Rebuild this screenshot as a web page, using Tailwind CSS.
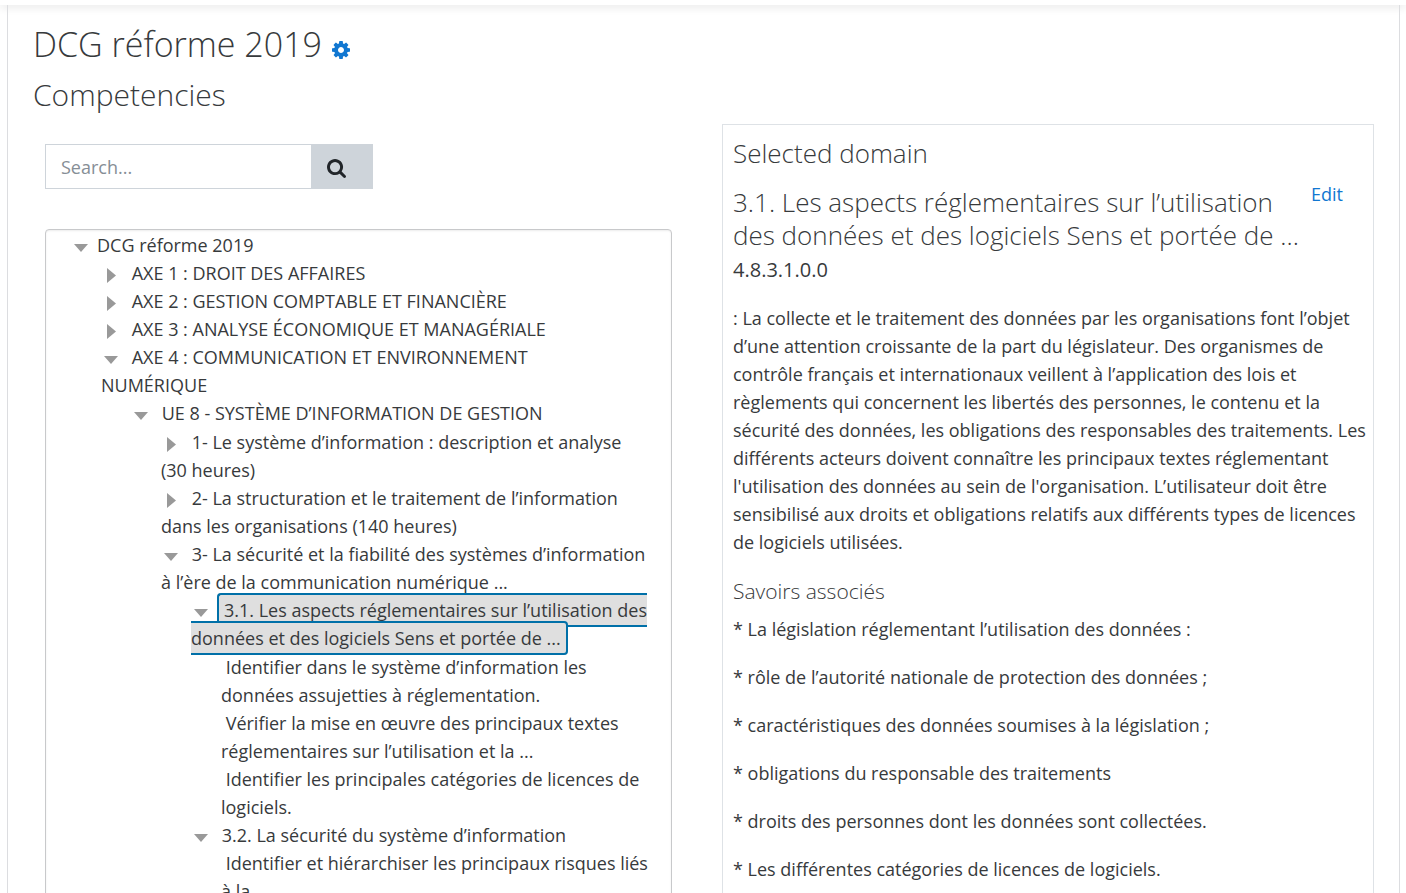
<!DOCTYPE html>
<html lang="fr">
<head>
<meta charset="utf-8">
<title>DCG réforme 2019 - Competencies</title>
<script src="https://cdn.jsdelivr.net/npm/@tailwindcss/browser@4"></script>
</head>
<body class="h-screen overflow-hidden bg-white font-['Open_Sans',sans-serif] text-[18px] leading-7 text-[#373a3c]">
<header class="h-[5px] bg-white shadow-[0_2px_8px_rgba(0,0,0,0.12)]"></header>
<main class="mr-[6px] ml-[7px] min-h-screen border-x border-[#dcdde0] px-[25px] pt-[16px]">
  <h1 class="flex items-center gap-[10px] text-[34px] leading-[46px] font-light whitespace-nowrap">DCG réforme 2019
    <a href="#" aria-label="Settings" class="mt-3 text-[#1177d1]">
      <svg class="size-[18px]" viewBox="0 0 1536 1536" fill="currentColor"><path d="M1024 768q0-106-75-181t-181-75-181 75-75 181 75 181 181 75 181-75 75-181zm512-109v222q0 12-8 23t-20 13l-185 28q-19 54-39 91 35 50 107 138 10 12 10 25t-9 23q-27 37-99 108t-94 71q-12 0-26-9l-138-108q-44 23-91 38-16 136-29 186-7 28-36 28h-222q-14 0-24.500-8.500t-11.500-21.500l-28-184q-49-16-90-37l-141 107q-10 9-25 9-14 0-25-11-126-114-165-168-7-10-7-23 0-12 8-23 15-21 51-66.500t54-70.500q-27-50-41-99l-183-27q-13-2-21-12.500t-8-23.500v-222q0-12 8-23t19-13l186-28q14-46 39-92-40-57-107-138-10-12-10-24 0-10 9-23 26-36 98.500-107.500t94.500-71.500q13 0 26 10l138 107q44-23 91-38 16-136 29-186 7-28 36-28h222q14 0 24.500 8.500t11.500 21.500l28 184q49 16 90 37l142-107q9-9 24-9 13 0 25 10 129 119 165 170 7 8 7 22 0 12-8 23-15 21-51 66.500t-54 70.500q26 50 41 98l183 28q13 2 21 12.500t8 23.500z"/></svg>
    </a>
  </h1>
  <h2 class="mt-[10px] text-[30px] leading-9 font-light">Competencies</h2>

  <div class="mt-[11px] grid grid-cols-[627fr_652fr] items-start gap-[50px] pl-3">
    <section class="min-w-0 pt-5">
      <form class="flex h-[45px] w-[328px]">
        <input type="text" aria-label="Search" placeholder="Search..." class="min-w-0 flex-1 border border-r-0 border-[#ced4da] px-[15px] placeholder:text-[#868e96]">
        <button type="button" aria-label="Search" class="flex w-[62px] items-center bg-[#ced4da] pl-4 text-[#212529]">
          <svg class="mt-[3px] size-[19px]" viewBox="0 0 1664 1664" fill="currentColor"><path d="M1152 704q0-185-131.500-316.500t-316.500-131.500-316.500 131.500-131.500 316.500 131.500 316.500 316.500 131.500 316.500-131.500 131.500-316.500zm512 832q0 52-38 90t-90 38q-54 0-90-38l-343-342q-179 124-399 124-143 0-273.500-55.500t-225-150-150-225-55.500-273.500 55.500-273.500 150-225 225-150 273.500-55.500 273.500 55.500 225 150 150 225 55.500 273.500q0 220-124 399l343 343q37 37 37 90z"/></svg>
        </button>
      </form>

      <ul class="mt-[40px] min-h-screen rounded border border-[#c8c9cb] pt-px pl-[25px] whitespace-nowrap shadow-[inset_0_1px_2px_rgba(0,0,0,0.08)]">
        <li><svg class="mr-[9px] ml-[3px] inline-block h-[8px] w-[14px] align-[0px] text-[#999]" viewBox="0 0 14 8" fill="currentColor"><path d="M0 0h14L7 8z"/></svg>DCG réforme 2019
          <ul class="pl-[30px]">
            <li><svg class="mr-[11px] ml-[6px] inline-block h-[15px] w-[9px] align-[-3px] text-[#999]" viewBox="0 0 9 15" fill="currentColor"><path d="M0 0v15l9-7.500z"/></svg> AXE 1 : DROIT DES AFFAIRES</li>
            <li><svg class="mr-[11px] ml-[6px] inline-block h-[15px] w-[9px] align-[-3px] text-[#999]" viewBox="0 0 9 15" fill="currentColor"><path d="M0 0v15l9-7.500z"/></svg> AXE 2 : GESTION COMPTABLE ET FINANCIÈRE</li>
            <li><svg class="mr-[11px] ml-[6px] inline-block h-[15px] w-[9px] align-[-3px] text-[#999]" viewBox="0 0 9 15" fill="currentColor"><path d="M0 0v15l9-7.500z"/></svg> AXE 3 : ANALYSE ÉCONOMIQUE ET MANAGÉRIALE</li>
            <li><svg class="mr-[9px] ml-[3px] inline-block h-[8px] w-[14px] align-[0px] text-[#999]" viewBox="0 0 14 8" fill="currentColor"><path d="M0 0h14L7 8z"/></svg> AXE 4 : COMMUNICATION ET ENVIRONNEMENT<br>NUMÉRIQUE
              <ul class="pl-[30px]">
                <li><svg class="mr-[9px] ml-[3px] inline-block h-[8px] w-[14px] align-[0px] text-[#999]" viewBox="0 0 14 8" fill="currentColor"><path d="M0 0h14L7 8z"/></svg> UE 8 - SYSTÈME D’INFORMATION DE GESTION
                  <ul class="mt-px pl-[30px]">
                    <li><svg class="mr-[11px] ml-[6px] inline-block h-[15px] w-[9px] align-[-3px] text-[#999]" viewBox="0 0 9 15" fill="currentColor"><path d="M0 0v15l9-7.500z"/></svg> 1- Le système d’information : description et analyse<br>(30 heures)</li>
                    <li><svg class="mr-[11px] ml-[6px] inline-block h-[15px] w-[9px] align-[-3px] text-[#999]" viewBox="0 0 9 15" fill="currentColor"><path d="M0 0v15l9-7.500z"/></svg> 2- La structuration et le traitement de l’information<br>dans les organisations (140 heures)</li>
                    <li><svg class="mr-[9px] ml-[3px] inline-block h-[8px] w-[14px] align-[0px] text-[#999]" viewBox="0 0 14 8" fill="currentColor"><path d="M0 0h14L7 8z"/></svg> 3- La sécurité et la fiabilité des systèmes d’information<br>à l’ère de la communication numérique ...
                      <ul class="pl-[30px]">
                        <li><svg class="mr-[9px] ml-[3px] inline-block h-[8px] w-[14px] align-[0px] text-[#999]" viewBox="0 0 14 8" fill="currentColor"><path d="M0 0h14L7 8z"/></svg><span class="rounded border-2 border-[#0070a8] bg-[#dfdfdf] px-[5px] py-[3px]">3.1. Les aspects réglementaires sur l’utilisation des<br>données et des logiciels Sens et portée de ...</span>
                          <ul class="mt-px pl-[30px]">
                            <li>&nbsp;Identifier dans le système d’information les<br>données assujetties à réglementation.</li>
                            <li>&nbsp;Vérifier la mise en œuvre des principaux textes<br>réglementaires sur l’utilisation et la ...</li>
                            <li>&nbsp;Identifier les principales catégories de licences de<br>logiciels.</li>
                          </ul>
                        </li>
                        <li><svg class="mr-[9px] ml-[3px] inline-block h-[8px] w-[14px] align-[0px] text-[#999]" viewBox="0 0 14 8" fill="currentColor"><path d="M0 0h14L7 8z"/></svg> 3.2. La sécurité du système d’information
                          <ul class="pl-[30px]">
                            <li>&nbsp;Identifier et hiérarchiser les principaux risques liés<br>à la</li>
                          </ul>
                        </li>
                      </ul>
                    </li>
                  </ul>
                </li>
              </ul>
            </li>
          </ul>
        </li>
      </ul>
    </section>

    <section class="min-h-screen min-w-0 border border-[#dee2e6] px-[10px] pt-3 whitespace-nowrap">
      <h3 class="text-[26px] leading-[33px] font-light">Selected domain</h3>
      <div class="mt-4 flex items-start justify-between pr-5">
        <h4 class="text-[26px] leading-[33px] font-light">3.1. Les aspects réglementaires sur l’utilisation<br>des données et des logiciels Sens et portée de ...</h4>
        <a href="#" class="-mt-[6px] -ml-10 text-[#1177d1]">Edit</a>
      </div>
      <p class="mt-1 text-[20px] font-medium">4.8.3.1.0.0</p>
      <p class="mt-5">: La collecte et le traitement des données par les organisations font l’objet<br>d’une attention croissante de la part du législateur. Des organismes de<br>contrôle français et internationaux veillent à l’application des lois et<br>règlements qui concernent les libertés des personnes, le contenu et la<br>sécurité des données, les obligations des responsables des traitements. Les<br>différents acteurs doivent connaître les principaux textes réglementant<br>l'utilisation des données au sein de l'organisation. L’utilisateur doit être<br>sensibilisé aux droits et obligations relatifs aux différents types de licences<br>de logiciels utilisées.</p>
      <h5 class="mt-[21px] text-[21px] font-light">Savoirs associés</h5>
      <div class="mt-[10px] flex flex-col gap-5">
        <p>* La législation réglementant l’utilisation des données :</p>
        <p>* rôle de l’autorité nationale de protection des données ;</p>
        <p>* caractéristiques des données soumises à la législation ;</p>
        <p>* obligations du responsable des traitements</p>
        <p>* droits des personnes dont les données sont collectées.</p>
        <p>* Les différentes catégories de licences de logiciels.</p>
      </div>
    </section>
  </div>
</main>
</body>
</html>
